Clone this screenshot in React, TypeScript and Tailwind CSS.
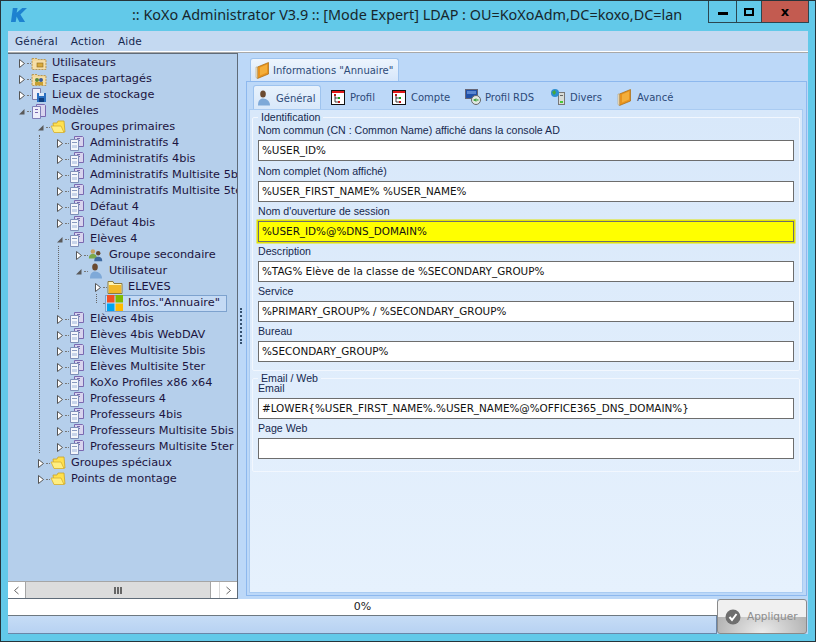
import type { ReactNode } from "react";

const uiFont = "font-['DejaVu_Sans','Liberation_Sans',sans-serif]";
const labelFont = "font-['Liberation_Sans',Arial,sans-serif]";

type Kind = "share" | "shared" | "storage" | "model" | "folder" | "doc" | "group" | "user" | "goldfolder" | "windows";

type TreeRow = {
  label: string;
  level: number;
  kind: Kind;
  open?: boolean;
  leaf?: boolean;
  selected?: boolean;
};

const rows: TreeRow[] = [
  { label: "Utilisateurs", level: 0, kind: "share" },
  { label: "Espaces partagés", level: 0, kind: "shared" },
  { label: "Lieux de stockage", level: 0, kind: "storage" },
  { label: "Modèles", level: 0, kind: "model", open: true },
  { label: "Groupes primaires", level: 1, kind: "folder", open: true },
  { label: "Administratifs 4", level: 2, kind: "doc" },
  { label: "Administratifs 4bis", level: 2, kind: "doc" },
  { label: "Administratifs Multisite 5bis", level: 2, kind: "doc" },
  { label: "Administratifs Multisite 5ter", level: 2, kind: "doc" },
  { label: "Défaut 4", level: 2, kind: "doc" },
  { label: "Défaut 4bis", level: 2, kind: "doc" },
  { label: "Elèves 4", level: 2, kind: "doc", open: true },
  { label: "Groupe secondaire", level: 3, kind: "group" },
  { label: "Utilisateur", level: 3, kind: "user", open: true },
  { label: "ELEVES", level: 4, kind: "goldfolder" },
  { label: 'Infos."Annuaire"', level: 4, kind: "windows", leaf: true, selected: true },
  { label: "Elèves 4bis", level: 2, kind: "doc" },
  { label: "Elèves 4bis WebDAV", level: 2, kind: "doc" },
  { label: "Elèves Multisite 5bis", level: 2, kind: "doc" },
  { label: "Elèves Multisite 5ter", level: 2, kind: "doc" },
  { label: "KoXo Profiles x86 x64", level: 2, kind: "doc" },
  { label: "Professeurs 4", level: 2, kind: "doc" },
  { label: "Professeurs 4bis", level: 2, kind: "doc" },
  { label: "Professeurs Multisite 5bis", level: 2, kind: "doc" },
  { label: "Professeurs Multisite 5ter", level: 2, kind: "doc" },
  { label: "Groupes spéciaux", level: 1, kind: "folder" },
  { label: "Points de montage", level: 1, kind: "folder" },
];

const indent = ["pl-[11px]", "pl-[30px]", "pl-[49px]", "pl-[68px]", "pl-[87px]"];

function TreeIcon({ kind }: { kind: Kind }) {
  if (kind === "folder")
    return (
      <svg width="16" height="16" viewBox="0 0 16 16">
        <path d="M3 4h4l1-2h6l1 11H4z" fill="#ffe04d" stroke="#c9a227" strokeWidth=".8" />
        <path d="M1 7h10l3 6.500H4z" fill="#ffee80" stroke="#d8b030" strokeWidth=".8" />
      </svg>
    );
  if (kind === "goldfolder")
    return (
      <svg width="16" height="16" viewBox="0 0 16 16">
        <path d="M1 2.500h5l1 2h8v10H1z" fill="#fff3b0" stroke="#8a7a40" />
        <rect x="2" y="6" width="12" height="8" fill="#f0b828" />
      </svg>
    );
  if (kind === "windows")
    return (
      <svg width="16" height="16" viewBox="0 0 16 16">
        <rect x="0" y="0" width="7.500" height="7.500" fill="#f25022" />
        <rect x="8.500" y="0" width="7.500" height="7.500" fill="#7fba00" />
        <rect x="0" y="8.500" width="7.500" height="7.500" fill="#00a4ef" />
        <rect x="8.500" y="8.500" width="7.500" height="7.500" fill="#ffb900" />
      </svg>
    );
  if (kind === "doc")
    return (
      <svg width="16" height="16" viewBox="0 0 16 16">
        <path d="M5.500 1.500h8l1 1v9h-9z" fill="#d8d4ee" stroke="#7a68b0" />
        <rect x="8" y="3" width="3" height="1" fill="#7a68b0" />
        <rect x="8" y="5" width="3" height="1" fill="#7a68b0" />
        <path d="M1.500 4.500h8v11h-8z" fill="#f4f6fb" stroke="#7f8fb8" />
        <rect x="3" y="7" width="5" height="1" fill="#8a9ac0" />
        <rect x="3" y="10" width="5" height="3" fill="#c8d4ea" />
      </svg>
    );
  if (kind === "model")
    return (
      <svg width="16" height="16" viewBox="0 0 16 16">
        <path d="M5.500 1.500h8l1 1v11h-9z" fill="#d8d4ee" stroke="#7a68b0" />
        <path d="M1.500 3.500h8v12h-8z" fill="#eeeefa" stroke="#7f7fb8" />
        <rect x="4" y="6" width="3" height="1" fill="#7a68b0" />
        <rect x="4" y="9" width="3" height="1" fill="#7a68b0" />
      </svg>
    );
  if (kind === "share" || kind === "shared")
    return (
      <svg width="16" height="16" viewBox="0 0 16 16">
        <path d="M1 3.500h5l1 1h8v10H1z" fill="#f2d79a" stroke="#b89a5a" strokeDasharray="2 1" />
        <rect x="2" y="6" width="12" height="8" fill="#f6dfa8" />
        {kind === "share" ? (
          <rect x="6" y="8" width="6" height="4" fill="#d9a93a" stroke="#8a6a20" strokeWidth=".6" />
        ) : (
          <>
            <circle cx="6" cy="9" r="2" fill="#5a8a3a" />
            <circle cx="10" cy="9" r="2" fill="#3a5a9a" />
            <rect x="4" y="11" width="8" height="3" fill="#c8a030" />
          </>
        )}
      </svg>
    );
  if (kind === "storage")
    return (
      <svg width="16" height="16" viewBox="0 0 16 16">
        <path d="M1.500 1.500h8v11h-8z" fill="#eeeef8" stroke="#7f7fa8" />
        <rect x="6" y="6" width="9" height="9" fill="#2a6fc0" />
        <rect x="8" y="6" width="5" height="3" fill="#dfeaf8" />
        <rect x="8" y="11" width="5" height="4" fill="#0f3f80" />
      </svg>
    );
  if (kind === "group")
    return (
      <svg width="18" height="16" viewBox="0 0 18 16">
        <circle cx="5.500" cy="4" r="2.500" fill="#c8a060" />
        <path d="M1 12c0-4 2-5 4.500-5S10 8 10 12z" fill="#7aa84a" />
        <circle cx="11.500" cy="6" r="2.500" fill="#6a4a30" />
        <path d="M7 15c0-4 2-5 4.500-5s4.500 1 4.500 5z" fill="#3f6aa0" />
      </svg>
    );
  return (
    <svg width="16" height="16" viewBox="0 0 16 16">
      <ellipse cx="7" cy="4" rx="2.800" ry="3.500" fill="#6a4a30" />
      <path d="M2 15.500c0-5 2-7 5-7 4 0 7 3 7 7z" fill="#7ea9d8" />
    </svg>
  );
}

function Expander({ open, leaf }: { open?: boolean; leaf?: boolean }) {
  if (leaf) return <span className="w-[6px] shrink-0" />;
  return open ? (
    <svg width="6" height="7" viewBox="0 0 6 7" className="shrink-0">
      <path d="M5.500 1v5.500H0z" fill="#595959" />
    </svg>
  ) : (
    <svg width="6" height="9" viewBox="0 0 6 9" className="shrink-0">
      <path d="M.5.500l5 4-5 4z" fill="#fff" stroke="#555" />
    </svg>
  );
}

function Row({ row }: { row: TreeRow }) {
  const content = (
    <>
      <span className="flex h-4 w-4 shrink-0 items-center justify-center">
        <TreeIcon kind={row.kind} />
      </span>
      <span className="ml-[4px] whitespace-nowrap px-px text-[11.300px] leading-4 text-[#1c1440]">{row.label}</span>
    </>
  );
  return (
    <div className={`flex h-4 items-center ${indent[row.level]}`}>
      <Expander open={row.open} leaf={row.leaf} />
      <span className="ml-[2px] w-[4px] shrink-0 border-t border-dotted border-[#777]" />
      {row.selected ? (
        <div className="-ml-[2px] flex h-[17px] items-center border border-[#7da2ce] bg-[#c4daf4] pl-px pr-[5px]">{content}</div>
      ) : (
        content
      )}
    </div>
  );
}

function Tree() {
  return (
    <div className="flex w-[230px] shrink-0 flex-col border border-l-0 border-[#5f6b78] bg-[#b5cfeb]">
      <div className="relative flex-1 overflow-hidden pt-px">
        {rows.map((row) => (
          <Row key={row.label} row={row} />
        ))}
        <span className="absolute left-[31px] top-[81px] h-[318px] border-l border-dotted border-[#666]" />
        <span className="absolute left-[50px] top-[192px] h-[63px] border-l border-dotted border-[#666]" />
        <span className="absolute left-[88px] top-[240px] h-[9px] border-l border-dotted border-[#666]" />
      </div>
      <div className="flex h-[17px] shrink-0 items-center border-t border-[#a5a5a5] bg-white text-[#666]">
        <span className="flex h-full w-[17px] items-center justify-center">
          <svg width="7" height="9" viewBox="0 0 7 9">
            <path d="M5.500 1L1.500 4.500l4 3.500" fill="none" stroke="#666" />
          </svg>
        </span>
        <span className="flex h-full w-[186px] items-center justify-center gap-px border-x border-[#a5a5a5] bg-[#dcdcdc]">
          <span className="h-[7px] w-[2px] bg-[#666]" />
          <span className="h-[7px] w-[2px] bg-[#666]" />
          <span className="h-[7px] w-[2px] bg-[#666]" />
        </span>
        <span className="w-[8px]" />
        <span className="flex h-full w-[17px] items-center justify-center border-l border-[#d8d8d8]">
          <svg width="7" height="9" viewBox="0 0 7 9">
            <path d="M1.500 1l4 3.500L1.500 8" fill="none" stroke="#666" />
          </svg>
        </span>
      </div>
    </div>
  );
}

function Book() {
  return (
    <svg width="16" height="17" viewBox="0 0 16 17">
      <path d="M2.500 5L13.500.5V12l-11 4.500z" fill="#e8931e" stroke="#a86a10" strokeWidth=".7" />
      <path d="M5 5.500l7-3v8l-7 3z" fill="#f4ae3a" />
      <path d="M1 5l1.500 0v11.500L1 15.500z" fill="#f8e8c8" stroke="#a89060" strokeWidth=".5" />
    </svg>
  );
}

function TreeDoc() {
  return (
    <svg width="14" height="15" viewBox="0 0 14 15">
      <rect x=".5" y=".5" width="13" height="14" fill="#fff" stroke="#111" />
      <rect x="1" y="1" width="12" height="2" fill="#e01818" />
      <rect x="3" y="4" width="2" height="2" fill="#c01818" />
      <rect x="7" y="7" width="2" height="2" fill="#18a018" />
      <rect x="7" y="11" width="2" height="2" fill="#c01818" />
      <path d="M4 6v6h3M4 8h3" fill="none" stroke="#111" strokeWidth=".8" />
    </svg>
  );
}

function Tab({ icon, label, active, className }: { icon: ReactNode; label: string; active?: boolean; className: string }) {
  return (
    <div
      className={`flex h-[24px] items-center gap-[4px] ${className} ${
        active ? "rounded-t-[3px] border border-b-0 border-[#9ec3ee] bg-gradient-to-b from-[#e8f2fc] to-[#d8e8fa]" : ""
      }`}
    >
      <span className="flex w-4 shrink-0 justify-center">{icon}</span>
      <span className="whitespace-nowrap pt-px text-[10px] text-[#2c4a78]">{label}</span>
    </div>
  );
}

function Field({ label, value, highlight, className }: { label: string; value: string; highlight?: boolean; className?: string }) {
  return (
    <div className={`flex h-10 flex-col ${className ?? ""}`}>
      <span className={`h-[19px] whitespace-nowrap text-[10.600px] leading-[18px] text-[#15284e] ${labelFont}`}>{label}</span>
      <div
        className={`flex h-[21px] items-center border border-[#6d6d6d] px-[3px] text-[10.400px] text-[#111] ${
          highlight ? "bg-[#ffff00] shadow-[0_0_0_1.500px_#e4e400]" : "bg-white"
        }`}
      >
        {value}
      </div>
    </div>
  );
}

function Group({ title, className, children }: { title: string; className: string; children: ReactNode }) {
  return (
    <fieldset className={`mx-[2px] rounded-[2px] border border-[#f2f7fe] px-[5px] ${className}`}>
      <legend className={`px-[3px] text-[10.600px] leading-[12px] text-[#15284e] ${labelFont}`}>{title}</legend>
      {children}
    </fieldset>
  );
}

function WindowButtons() {
  return (
    <div className="mr-[6px] flex h-[22px] items-stretch self-start border border-t-0 border-[#2b4650]">
      <div className="flex w-[28px] items-center justify-center border-r border-[#2b4650]">
        <span className="mt-1 h-[3px] w-[10px] bg-black" />
      </div>
      <div className="flex w-[25px] items-center justify-center border-r border-[#2b4650]">
        <span className="h-[8px] w-[10px] border-2 border-black" />
      </div>
      <div className="flex w-[46px] items-center justify-center bg-[#c35b50] text-[13px] font-bold leading-none text-black">
        x
      </div>
    </div>
  );
}

export default function App() {
  return (
    <div className={`flex h-[642px] w-[816px] flex-col overflow-hidden border border-[#26343a] bg-[#62c9e9] ${uiFont}`}>
      <div className="flex h-[30px] shrink-0 items-center">
        <svg width="17" height="16" viewBox="0 0 18 17" className="mb-[2px] ml-[9px]">
          <path d="M3 1h5L7 6l6-5h5l-7 7 5 8h-6l-3-6-1 6H1z" fill="#1d82d0" />
        </svg>
        <span className="mb-[2px] ml-[105px] flex-1 whitespace-nowrap font-['Noto_Sans',sans-serif] text-[14.400px] text-[#17262c]">
          :: KoXo Administrator V3.9 :: [Mode Expert] LDAP : OU=KoXoAdm,DC=koxo,DC=lan
        </span>
        <WindowButtons />
      </div>
      <div className="mx-[7px] flex min-h-0 flex-1 flex-col">
        <div className="flex h-[20px] shrink-0 items-center gap-[13px] bg-[#c4d9f1] pl-[7px] pt-[2px] text-[10.500px] tracking-[0.2px] text-[#15284e]">
          <span>Général</span>
          <span>Action</span>
          <span>Aide</span>
        </div>
        <div className="h-[2px] shrink-0 border-b border-[#a8a8a8] bg-white" />
        <div className="flex h-[546px] shrink-0">
          <Tree />
          <div className="flex w-[6px] shrink-0 items-center justify-center bg-[#bcd8f8]">
            <span className="h-[36px] border-l-2 border-dotted border-[#34506f]" />
          </div>
          <div className="flex min-w-0 flex-1 flex-col bg-[#bcd8f8] pt-[5px]">
            <div className="ml-[6px] flex h-[23px] w-[149px] shrink-0 items-center gap-[2px] rounded-t-[3px] border border-b-0 border-[#9ec3ee] bg-gradient-to-b from-[#eef5fd] to-[#d6e6fa] pl-[4px]">
              <Book />
              <span className="whitespace-nowrap text-[10px] text-[#2c4a78]">Informations "Annuaire"</span>
            </div>
            <div className="mb-[3px] ml-[2px] mr-[1px] flex min-h-0 flex-1 flex-col border border-[#8db8ee] bg-[#bcd8f8] pl-[2px] pr-[3px] pt-[3px]">
              <div className="flex h-[24px] shrink-0 items-center pl-[4px]">
                <Tab active className="w-[68px] pl-[2px]" icon={<TreeIcon kind="user" />} label="Général" />
                <Tab className="ml-[9px] w-[61px]" icon={<TreeDoc />} label="Profil" />
                <Tab className="w-[74px]" icon={<TreeDoc />} label="Compte" />
                <Tab
                  className="w-[85px]"
                  icon={
                    <svg width="16" height="16" viewBox="0 0 16 16">
                      <rect x=".5" y=".5" width="12" height="9" fill="#2050a8" stroke="#667" />
                      <rect x="2" y="2" width="9" height="3" fill="#5a86d0" />
                      <circle cx="11" cy="11" r="4.500" fill="#e2e8e2" stroke="#666" />
                      <path d="M8.500 11h5M11 9.500l-1.500 1.500 1.500 1.500" fill="none" stroke="#189018" />
                    </svg>
                  }
                  label="Profil RDS"
                />
                <Tab
                  className="w-[67px]"
                  icon={
                    <svg width="16" height="16" viewBox="0 0 16 16">
                      <rect x="8.500" y="3.500" width="6" height="12" fill="#d8dcd8" stroke="#777" />
                      <rect x="10" y="12" width="3" height="2" fill="#47c838" />
                      <rect x="10" y="6" width="3" height="1" fill="#666" />
                      <circle cx="5" cy="4" r="4" fill="#2d8fd0" />
                      <path d="M2 3l3-2 1 3-2 2z" fill="#47a838" />
                    </svg>
                  }
                  label="Divers"
                />
                <Tab className="w-[70px]" icon={<Book />} label="Avancé" />
              </div>
              <div className="mb-[2px] min-h-0 flex-1 border border-[#a9cbf2] bg-gradient-to-b from-[#d8e8fa] to-[#e6f1fd] pt-[1px]">
                <Group title="Identification" className="h-[260px]">
                  <div className="-mt-[2px]">
                    <Field label="Nom commun (CN : Common Name) affiché dans la console AD" value="%USER_ID%" />
                    <Field className="mt-px" label="Nom complet (Nom affiché)" value="%USER_FIRST_NAME% %USER_NAME%" />
                    <Field label="Nom d'ouverture de session" value="%USER_ID%@%DNS_DOMAIN%" highlight />
                    <Field label="Description" value="%TAG% Elève de la classe de %SECONDARY_GROUP%" />
                    <Field label="Service" value="%PRIMARY_GROUP% / %SECONDARY_GROUP%" />
                    <Field label="Bureau" value="%SECONDARY_GROUP%" />
                  </div>
                </Group>
                <Group title="Email / Web" className="mt-[1px] h-[100px]">
                  <div className="-mt-[5px]">
                    <Field label="Email" value="#LOWER{%USER_FIRST_NAME%.%USER_NAME%@%OFFICE365_DNS_DOMAIN%}" />
                    <Field label="Page Web" value="" />
                  </div>
                </Group>
              </div>
            </div>
          </div>
        </div>
        <div className="flex h-[35px] shrink-0 bg-[#bcd8f8]">
          <div className="flex w-[709px] shrink-0 flex-col">
            <div className="flex h-[17px] items-center justify-center border-b border-[#6d7880] bg-white text-[11px] text-[#222]">
              0%
            </div>
            <div className="flex-1 border-b border-r border-[#6a86a8] bg-gradient-to-b from-[#c6dcf6] to-[#b7d2f2]" />
          </div>
          <div className="flex w-[90px] items-center gap-[6px] overflow-hidden rounded-[3px] border border-[#8a8a8a] bg-[linear-gradient(#f0f0f0_50%,transparent_50%),radial-gradient(ellipse_at_50%_100%,#ececec,#b4b4b4_75%)] pl-[7px]">
            <svg width="16" height="16" viewBox="0 0 16 16" className="shrink-0">
              <circle cx="8" cy="8" r="7.500" fill="#6e6e6e" />
              <path d="M4.500 8l2.500 3 4.500-6" fill="none" stroke="#fff" strokeWidth="2" />
            </svg>
            <span className="text-[10.500px] text-[#8c8c8c]">Appliquer</span>
          </div>
        </div>
      </div>
    </div>
  );
}
